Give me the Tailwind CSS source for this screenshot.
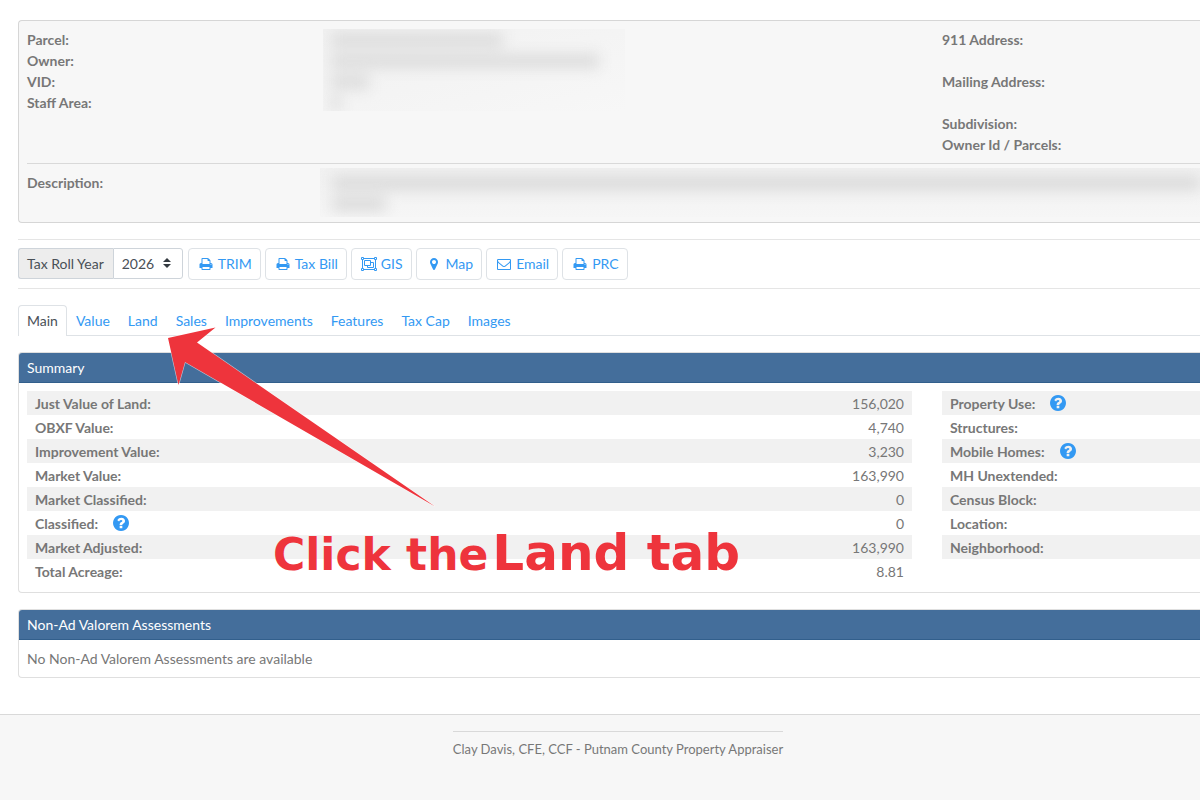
<!DOCTYPE html>
<html lang="en">
<head>
    <meta charset="UTF-8">
    <meta name="viewport" content="width=device-width, initial-scale=1.0">
    <title>Putnam County Property Appraiser</title>
    <script src="https://cdn.jsdelivr.net/npm/@tailwindcss/browser@4"></script>
</head>

<body class="relative flex min-h-screen flex-col overflow-x-hidden bg-white font-['Lato',sans-serif] text-[14px] leading-[21px] text-[#777]">

    <!--Icons-->
    <svg class="hidden" xmlns="http://www.w3.org/2000/svg">
        <symbol id="print" viewBox="0 0 1792 1792">
            <path d="M448 1536h896v-256h-896v256zm0-640h896v-384h-160q-40 0-68-28t-28-68v-160h-640v640zm1152 64q0-26-19-45t-45-19-45 19-19 45 19 45 45 19 45-19 19-45zm128 0v416q0 13-9.5 22.5t-22.5 9.5h-224v160q0 40-28 68t-68 28h-960q-40 0-68-28t-28-68v-160h-224q-13 0-22.5-9.5t-9.5-22.5v-416q0-79 56.5-135.5t135.5-56.5h64v-544q0-40 28-68t68-28h672q40 0 88 20t76 48l152 152q28 28 48 76t20 88v256h64q79 0 135.5 56.5t56.5 135.5z"/>
        </symbol>
        <symbol id="marker" viewBox="0 0 1792 1792">
            <path d="M1152 640q0-106-75-181t-181-75-181 75-75 181 75 181 181 75 181-75 75-181zm256 0q0 109-33 179l-364 774q-16 33-47.5 52t-67.5 19-67.5-19-46.5-52l-365-774q-33-70-33-179 0-212 150-362t362-150 362 150 150 362z"/>
        </symbol>
        <symbol id="envelope" viewBox="0 0 1792 1792">
            <path d="M1664 1504v-768q-32 36-69 66-268 206-426 338-51 43-83 67t-86.5 48.5-102.5 24.5h-2q-48 0-102.5-24.5t-86.5-48.5-83-67q-158-132-426-338-37-30-69-66v768q0 13 9.5 22.5t22.5 9.5h1472q13 0 22.5-9.5t9.5-22.5zm0-1051v-24.5l-.5-13-3-12.5-5.5-9-9-7.5-14-2.5h-1472q-13 0-22.5 9.5t-9.5 22.5q0 168 147 284 193 152 401 317 6 5 35 29.5t46 37.5 44.5 31.5 50.5 27.5 43 9h2q20 0 43-9t50.5-27.5 44.5-31.5 46-37.5 35-29.5q208-165 401-317 54-43 100.5-115.5t46.5-131.5zm128-37v1088q0 66-47 113t-113 47h-1472q-66 0-113-47t-47-113v-1088q0-66 47-113t113-47h1472q66 0 113 47t47 113z"/>
        </symbol>
        <symbol id="group" viewBox="0 0 16 14">
            <g fill="none" stroke="currentColor">
                <path d="M2.5 1.5h11M2.5 12.5h11M1.5 2.5v9M14.5 2.5v9"/>
                <path d="M.5.5h2v2h-2zM13.5.5h2v2h-2zM.5 11.5h2v2h-2zM13.5 11.5h2v2h-2z"/>
                <path d="M3.500 3.500h6v5h-6zM9.500 5.500h3v5h-6V8.500"/>
            </g>
        </symbol>
        <symbol id="help" viewBox="128 128 1536 1536">
            <path d="M1024 1376v-192q0-14-9-23t-23-9h-192q-14 0-23 9t-9 23v192q0 14 9 23t23 9h192q14 0 23-9t9-23zm256-672q0-88-55.5-163t-138.5-116-170-41q-243 0-371 213-15 24 8 42l132 100q7 6 19 6 16 0 25-12 53-68 86-92 34-24 86-24 48 0 85.5 26t37.5 59q0 38-20 61t-68 45q-63 28-115.5 86.5t-52.5 125.5v36q0 14 9 23t23 9h192q14 0 23-9t9-23q0-19 21.5-49.5t54.5-49.5q32-18 49-28.5t46-35 44.5-48 28-60.5 12.5-81zm384 192q0 209-103 385.5t-279.5 279.5-385.5 103-385.5-103-279.5-279.5-103-385.5 103-385.5 279.5-279.5 385.5-103 385.5 103 279.5 279.5 103 385.5z"/>
        </symbol>
    </svg>

    <main class="pt-5 pl-[18px]">

        <!--Parcel header-->
        <section class="rounded-l border border-r-0 border-[#d6d6d6] bg-[#f7f7f7] pt-2 pb-[5px] pl-2">
            <div class="grid grid-cols-[1fr_258px]">
                <div class="flex font-bold">
                    <div class="w-[296px]">
                        <p>Parcel:</p>
                        <p>Owner:</p>
                        <p>VID:</p>
                        <p>Staff Area:</p>
                    </div>
                    <!--redacted values-->
                    <div class="h-[82px] w-[302px] overflow-hidden bg-linear-to-br from-[#f1f1f1] to-[#f7f7f7] pl-2" aria-hidden="true">
                        <div class="flex flex-col gap-[7px] pt-1 blur-[7px]">
                            <div class="h-[14px] w-[172px] bg-[#dcdcdc]"></div>
                            <div class="h-[14px] w-[268px] bg-[#dcdcdc]"></div>
                            <div class="h-[14px] w-[38px] bg-[#dcdcdc]"></div>
                            <div class="h-[14px] w-[10px] bg-[#dcdcdc]"></div>
                        </div>
                    </div>
                </div>
                <div class="font-bold">
                    <p class="mb-[21px]">911 Address:</p>
                    <p class="mb-[21px]">Mailing Address:</p>
                    <p>Subdivision:</p>
                    <p>Owner Id / Parcels:</p>
                </div>
            </div>
            <hr class="mt-2 border-[#d9d9d9]">
            <div class="flex pt-1">
                <p class="w-[293px] pt-1 font-bold">Description:</p>
                <div class="h-[49px] flex-1 overflow-hidden bg-linear-to-b from-[#f1f1f1] to-[#f6f6f6] pl-3" aria-hidden="true">
                    <div class="flex flex-col gap-[7px] pt-2 blur-[7px]">
                        <div class="h-[14px] w-full bg-[#dadada]"></div>
                        <div class="h-[14px] w-[54px] bg-[#dadada]"></div>
                    </div>
                </div>
            </div>
        </section>

        <!--Toolbar-->
        <div class="mt-4 flex gap-1 border-y border-[#e5e5e5] py-2 text-[#3399f3]">
            <div class="mr-px flex h-[31px] text-[#495057]">
                <label for="tax-year" class="rounded-l-[3px] border border-r-0 border-[#ced4da] bg-[#ededed] pr-[9px] pl-2 leading-[29px]">Tax Roll Year</label>
                <div class="relative">
                    <select id="tax-year" class="h-full w-[70px] appearance-none rounded-r-[3px] border border-[#ced4da] bg-white pl-2">
                        <option>2026</option>
                    </select>
                    <svg class="pointer-events-none absolute top-[10px] right-3 h-[10px] w-2 fill-[#343a40]" viewBox="0 0 4 5"><path d="M2 0L0 2h4zm0 5L0 3h4z"/></svg>
                </div>
            </div>
            <button type="button" class="flex h-8 items-center gap-[3px] rounded border border-[#dee2e6] px-2 pb-px"><svg class="mx-[2px] size-[14px] fill-current"><use href="#print"/></svg>TRIM</button>
            <button type="button" class="flex h-8 items-center gap-[3px] rounded border border-[#dee2e6] px-2 pb-px"><svg class="mx-[2px] size-[14px] fill-current"><use href="#print"/></svg>Tax Bill</button>
            <button type="button" class="flex h-8 items-center gap-[3px] rounded border border-[#dee2e6] px-2 pb-px"><svg class="mx-px h-[14px] w-4"><use href="#group"/></svg>GIS</button>
            <button type="button" class="flex h-8 items-center gap-[3px] rounded border border-[#dee2e6] px-2 pb-px"><svg class="mx-[2px] size-[14px] fill-current"><use href="#marker"/></svg>Map</button>
            <button type="button" class="flex h-8 items-center gap-[3px] rounded border border-[#dee2e6] px-2 pb-px"><svg class="mx-[2px] size-[14px] fill-current"><use href="#envelope"/></svg>Email</button>
            <button type="button" class="flex h-8 items-center gap-[3px] rounded border border-[#dee2e6] px-2 pb-px"><svg class="mx-[2px] size-[14px] fill-current"><use href="#print"/></svg>PRC</button>
        </div>

        <!--Tabs-->
        <nav class="mt-4 flex border-b border-[#dee2e6] text-[#3399f3]">
            <a href="#" class="-mb-px h-[31px] rounded-t border border-b-0 border-[#dee2e6] bg-white px-2 pt-1 text-[#495057]">Main</a>
            <a href="#" class="px-[9px] pt-[5px]">Value</a>
            <a href="#" class="px-[9px] pt-[5px]">Land</a>
            <a href="#" class="px-[9px] pt-[5px]">Sales</a>
            <a href="#" class="px-[9px] pt-[5px]">Improvements</a>
            <a href="#" class="px-[9px] pt-[5px]">Features</a>
            <a href="#" class="px-[9px] pt-[5px]">Tax Cap</a>
            <a href="#" class="px-[9px] pt-[5px]">Images</a>
        </nav>

        <!--Summary-->
        <section class="mt-4 rounded-l border border-r-0 border-[#dfdfdf]">
            <h2 class="rounded-tl-[3px] border-b border-[#325f8c] bg-[#446e9b] py-1 pl-2 text-white">Summary</h2>
            <div class="grid grid-cols-[1fr_258px] items-start pt-2 pb-[9px] pl-2">
                <div class="pr-[30px]">
                    <table class="w-full">
                        <tbody class="[&>tr]:h-6 [&>tr:nth-child(odd)]:bg-[#f1f1f1] [&_td]:px-2 [&_td]:text-right [&_th]:px-2 [&_th]:text-left">
                            <tr><th>Just Value of Land:</th><td>156,020</td></tr>
                            <tr><th>OBXF Value:</th><td>4,740</td></tr>
                            <tr><th>Improvement Value:</th><td>3,230</td></tr>
                            <tr><th>Market Value:</th><td>163,990</td></tr>
                            <tr><th>Market Classified:</th><td>0</td></tr>
                            <tr>
                                <th><div class="flex items-center gap-[15px]">Classified: <button type="button" aria-label="Help"><svg class="size-4 fill-[#3399f3]"><use href="#help"/></svg></button></div></th>
                                <td>0</td>
                            </tr>
                            <tr><th>Market Adjusted:</th><td>163,990</td></tr>
                            <tr><th>Total Acreage:</th><td>8.81</td></tr>
                        </tbody>
                    </table>
                </div>
                <table class="w-full">
                    <tbody class="[&>tr]:h-6 [&>tr:nth-child(odd)]:bg-[#f1f1f1] [&_th]:px-2 [&_th]:text-left">
                        <tr><th><div class="flex items-center gap-[15px]">Property Use: <button type="button" aria-label="Help"><svg class="size-4 fill-[#3399f3]"><use href="#help"/></svg></button></div></th></tr>
                        <tr><th>Structures:</th></tr>
                        <tr><th><div class="flex items-center gap-[15px]">Mobile Homes: <button type="button" aria-label="Help"><svg class="size-4 fill-[#3399f3]"><use href="#help"/></svg></button></div></th></tr>
                        <tr><th>MH Unextended:</th></tr>
                        <tr><th>Census Block:</th></tr>
                        <tr><th>Location:</th></tr>
                        <tr><th>Neighborhood:</th></tr>
                    </tbody>
                </table>
            </div>
        </section>

        <!--Assessments-->
        <section class="mt-4 rounded-l border border-r-0 border-[#dfdfdf]">
            <h2 class="rounded-tl-[3px] border-b border-[#325f8c] bg-[#446e9b] py-1 pl-2 text-white">Non-Ad Valorem Assessments</h2>
            <p class="py-2 pl-2">No Non-Ad Valorem Assessments are available</p>
        </section>
    </main>

    <!--Footer-->
    <footer class="mt-9 flex flex-1 justify-center border-t border-[#d9d9d9] bg-[#f7f7f7] pt-4 pl-9">
        <p class="self-start border-t border-[#d9d9d9] pt-[7px] text-[13px]">Clay Davis, CFE, CCF - Putnam County Property Appraiser</p>
    </footer>

    <!--Callout over the page-->
    <svg class="pointer-events-none absolute top-[320px] left-[160px] h-[190px] w-[280px]" viewBox="160 320 280 190">
        <path d="M168 338L215.500 327.500L197 342.500L435 506.500L185 362L178.500 385Z" fill="#ee343c" stroke="#fff" stroke-opacity=".6" stroke-width="1.2" paint-order="stroke"/>
    </svg>
    <p class="pointer-events-none absolute top-[523px] left-[273px] flex items-baseline gap-1 font-['DejaVu_Sans',sans-serif] leading-[60px] font-bold whitespace-nowrap text-[#ee343c]">
        <span class="text-[44px]">Click the</span>
        <span class="text-[50px]">Land tab</span>
    </p>
</body>
</html>
